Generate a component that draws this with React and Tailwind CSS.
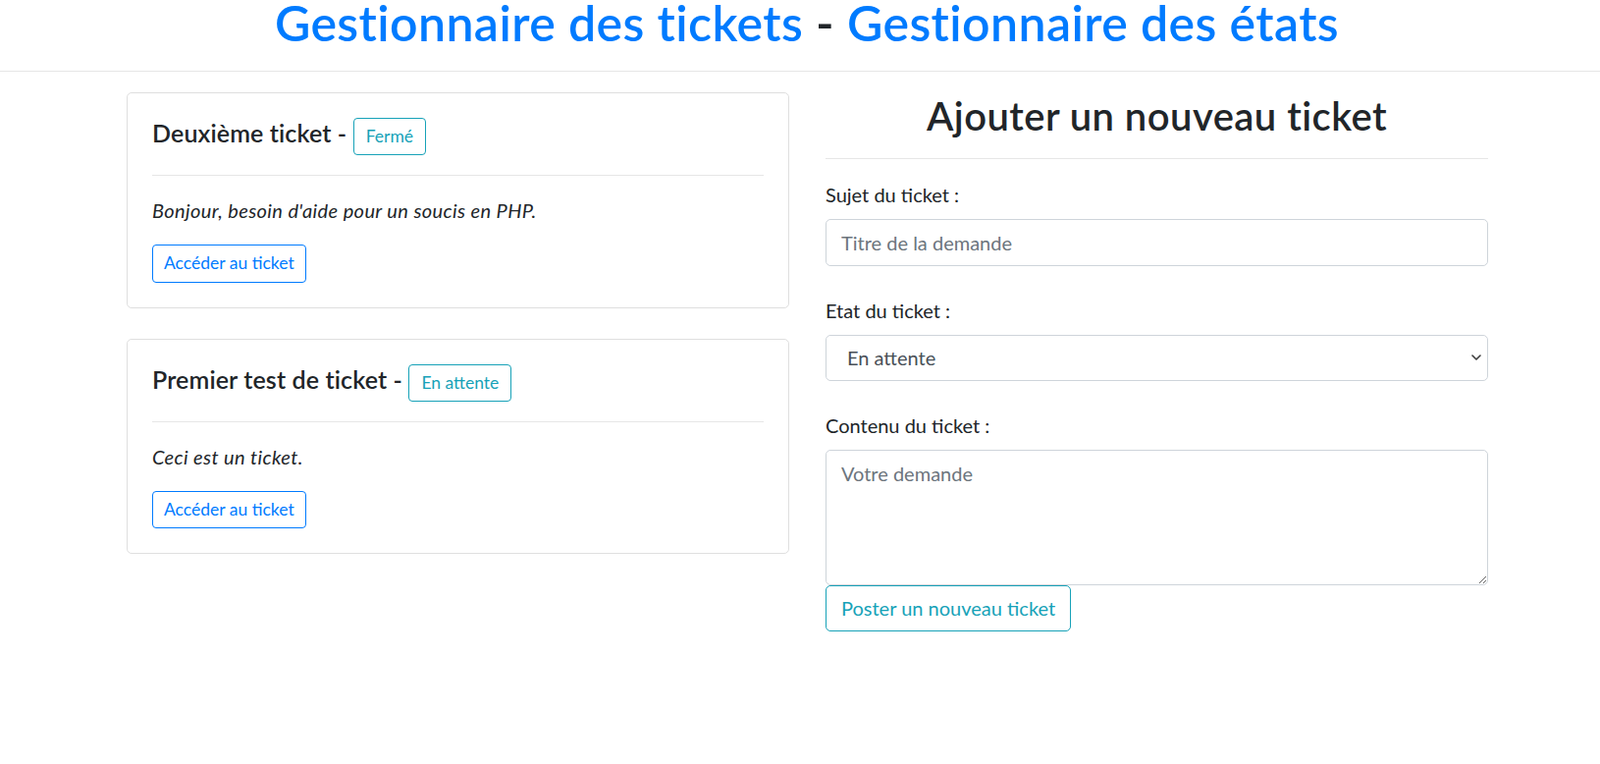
import React from 'react';

function Ticket({ title, status, body, className = '' }) {
    return (
        <div className={`rounded-[5px] border border-[#dfdfdf] p-[25px] ${className}`}>
            <h5 className="text-[25px] leading-[30px] font-semibold tracking-[0.005em]">
                {title} -{' '}
                <span className="inline-block rounded-[4px] border border-[#17a2b8] px-[12px] py-[5px] text-[17.5px] leading-[26.25px] font-normal tracking-normal text-[#17a2b8]">
                    {status}
                </span>
            </h5>
            <hr className="my-[20px] border-[#e6e6e6]" />
            <p className="text-[20px] leading-[30px] italic tracking-[0.02em]">{body}</p>
            <button className="mt-[20px] block rounded-[4px] border border-[#007bff] px-[11px] py-[5px] text-[17.5px] leading-[26.25px] text-[#007bff]">
                Accéder au ticket
            </button>
        </div>
    );
}

export default function App() {
    return (
        <div className="min-h-[778px] bg-white text-[#212529] font-['Lato','Noto_Sans',sans-serif]">
            <header className="h-[73px] border-b border-[#e6e6e6] pl-[14px] text-center">
                <h1 className="text-[50px] leading-[46px] font-semibold tracking-[0.008em]">
                    <a href="#" className="text-[#007bff]">Gestionnaire des tickets</a> - <a href="#" className="text-[#007bff]">Gestionnaire des états</a>
                </h1>
            </header>

            <main className="ml-[129px] mt-[21px] flex w-[1387px] gap-[37px]">
                <section className="w-[675px]">
                    <Ticket title="Deuxième ticket" status="Fermé" body="Bonjour, besoin d'aide pour un soucis en PHP." />
                    <Ticket className="mt-[31px]" title="Premier test de ticket" status="En attente" body="Ceci est un ticket." />
                </section>

                <section className="w-[675px]">
                    <h2 className="text-center text-[40px] leading-[48px] font-semibold tracking-[0.011em]">Ajouter un nouveau ticket</h2>
                    <hr className="mt-[19px] mb-[21px] border-[#e6e6e6]" />

                    <label className="mb-[10px] block text-[20px] leading-[30px]">Sujet du ticket :</label>
                    <input
                        type="text"
                        placeholder="Titre de la demande"
                        className="block h-[47.5px] w-full rounded-[5px] border border-[#ced4da] bg-white px-[15px] text-[20px] text-[#495057] placeholder:text-[#6c757d]"
                    />

                    <label className="mt-[30px] mb-[10px] block text-[20px] leading-[30px]">Etat du ticket :</label>
                    <div className="relative">
                        <select defaultValue="attente" className="block h-[47.5px] w-full appearance-none rounded-[5px] border border-[#ced4da] bg-white pl-[21px] pr-[30px] text-[20px] text-[#495057]">
                            <option value="attente">En attente</option>
                            <option value="ouvert">Ouvert</option>
                            <option value="ferme">Fermé</option>
                        </select>
                        <svg className="pointer-events-none absolute right-[7px] top-1/2 -translate-y-1/2" width="10" height="6" viewBox="0 0 10 6" fill="none">
                            <path d="M1 1l4 4 4-4" stroke="#3c3c3c" strokeWidth="1.6" strokeLinecap="round" strokeLinejoin="round" />
                        </svg>
                    </div>

                    <label className="mt-[30px] mb-[10px] block text-[20px] leading-[30px]">Contenu du ticket :</label>
                    <textarea
                        rows={4}
                        placeholder="Votre demande"
                        className="block h-[137.5px] w-full rounded-[5px] border border-[#ced4da] bg-white px-[15px] py-[7.5px] text-[20px] leading-[30px] text-[#495057] placeholder:text-[#6c757d]"
                    />
                    <button className="block rounded-[5px] border border-[#17a2b8] px-[15px] py-[7.5px] text-[20px] leading-[30px] text-[#17a2b8]">
                        Poster un nouveau ticket
                    </button>
                </section>
            </main>
        </div>
    );
}
